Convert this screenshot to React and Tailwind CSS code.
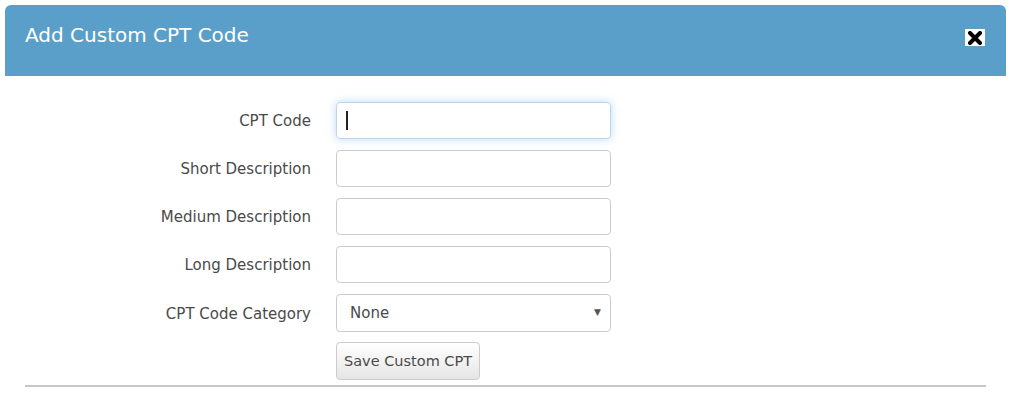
import React from 'react';

const rows = ['CPT Code', 'Short Description', 'Medium Description', 'Long Description'];

const App = () => {
  return (
    <div className="w-[1011px] h-[396px] bg-white overflow-hidden font-['DejaVu_Sans',sans-serif] text-[#333]">
      {/* Header */}
      <div className="mx-[5px] mt-[5px] h-[71px] bg-[#5a9fc9] rounded-t-[6px] flex items-start justify-between pl-[20px] pr-[21px]">
        <h2 className="mt-[17px] text-[20px] leading-[26px] text-white">Add Custom CPT Code</h2>
        <button className="mt-[24px] w-[20px] h-[17px] bg-white flex items-center justify-center">
          <svg width="16" height="14" viewBox="0 0 16 14">
            <path d="M3 2 L13 12 M13 2 L3 12" stroke="#000" strokeWidth="4" strokeLinecap="round" />
          </svg>
        </button>
      </div>

      {/* Form */}
      <div className="px-[25px] pt-[26px]">
        <div className="flex flex-col gap-[11px]">
          {rows.map((label, i) => (
            <div key={label} className="flex items-center">
              <label className="w-[286px] text-right text-[15px] leading-[20px] pt-[1px] text-[#4a4a4a]">{label}</label>
              <div className="ml-[25px] w-[275px] h-[37px] border border-[#ccc] rounded-[4px] flex items-center px-[8px]"
                style={i === 0 ? { borderColor: '#bcd5ea', boxShadow: '0 0 8px rgba(102,175,233,0.45)' } : undefined}>
                {i === 0 && <span className="w-[2px] h-[19px] bg-[#222] ml-[1px]" />}
              </div>
            </div>
          ))}
          <div className="flex items-center">
            <label className="w-[286px] text-right text-[15px] leading-[20px] pt-[1px] text-[#4a4a4a]">CPT Code Category</label>
            <div className="ml-[25px] w-[275px] h-[38px] border border-[#ccc] rounded-[4px] flex items-center justify-between pl-[13px] pr-[9px]">
              <span className="text-[15px] text-[#4a4a4a]">None</span>
              <span className="text-[9px] text-[#555]">▼</span>
            </div>
          </div>
        </div>
        <div className="ml-[311px] mt-[10px]">
          <button className="h-[38px] px-[7px] pt-[2px] border border-[#ccc] rounded-[4px] bg-gradient-to-b from-white to-[#e6e6e6] text-[14.5px] text-[#4a4a4a]">
            Save Custom CPT
          </button>
        </div>
        <div className="mt-[5px] w-[961px] h-[2px] bg-[#c8c8c8]" />
      </div>
    </div>
  );
};

export default App;
